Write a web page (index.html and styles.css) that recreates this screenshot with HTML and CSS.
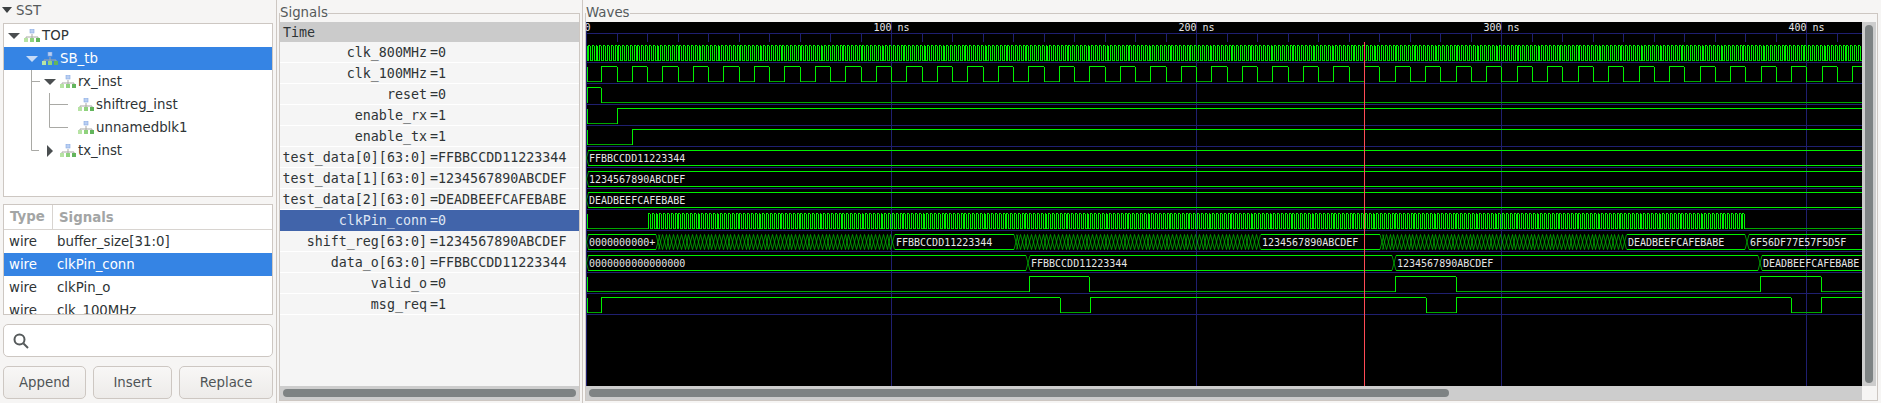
FILE: index.html
```html
<!DOCTYPE html>
<html>
  <head>
    <meta charset="utf-8">
    <title>GTKWave</title>
    <link rel="stylesheet" href="styles.css">
  </head>
  <body>
    <svg class="defs" width="0" height="0">
      <symbol id="scope" viewBox="0 0 16 14">
        <path d="M8 5v3M2 10V8h12v2M8 8v2" fill="none" stroke="#a9a9a5"/>
        <rect x="6" y="0" width="4" height="4" fill="#b9cff2" stroke="#86a9e2" stroke-width="0.6"/>
        <rect x="0" y="9" width="4" height="4" fill="#b7e3a4"/>
        <rect x="6" y="9" width="4" height="4" fill="#8fd27d"/>
        <rect x="12" y="9" width="4" height="4" fill="#63b55c"/>
      </symbol>
    </svg>

    <div class="app">
      <div class="sst">
        <div class="sst-title">
          <svg class="arrow-small" viewBox="0 0 10 6"><path d="M0 0h10L5 6z"/></svg>
          <span>SST</span>
        </div>

        <div class="tree">
          <svg class="tree-lines" width="269" height="172" viewBox="0 0 269 172">
            <path class="line-sel" d="M9.5 23v11.5H17"/>
            <path d="M27.5 46v80.5H35M27.5 57.5H36"/>
            <path d="M45.5 69v34.5H64M45.5 80.5H64"/>
          </svg>
          <div class="tree-row">
            <svg class="arrow" viewBox="0 0 12 6"><path d="M0 0h12L6 6z"/></svg>
            <svg class="scope"><use href="#scope"/></svg>
            <span>TOP</span>
          </div>
          <div class="tree-row level1 selected">
            <svg class="arrow" viewBox="0 0 12 6"><path d="M0 0h12L6 6z"/></svg>
            <svg class="scope"><use href="#scope"/></svg>
            <span>SB_tb</span>
          </div>
          <div class="tree-row level2">
            <svg class="arrow" viewBox="0 0 12 6"><path d="M0 0h12L6 6z"/></svg>
            <svg class="scope"><use href="#scope"/></svg>
            <span>rx_inst</span>
          </div>
          <div class="tree-row level3">
            <span class="arrow"></span>
            <svg class="scope"><use href="#scope"/></svg>
            <span>shiftreg_inst</span>
          </div>
          <div class="tree-row level3">
            <span class="arrow"></span>
            <svg class="scope"><use href="#scope"/></svg>
            <span>unnamedblk1</span>
          </div>
          <div class="tree-row level2">
            <svg class="arrow" viewBox="0 0 12 12"><path d="M3 0l6 6-6 6z"/></svg>
            <svg class="scope"><use href="#scope"/></svg>
            <span>tx_inst</span>
          </div>
        </div>

        <div class="var-list">
          <div class="var-head">
            <div class="col-type">Type</div>
            <div class="col-name">Signals</div>
          </div>
          <div class="var-row"><div class="col-type">wire</div><div class="col-name">buffer_size[31:0]</div></div>
          <div class="var-row selected"><div class="col-type">wire</div><div class="col-name">clkPin_conn</div></div>
          <div class="var-row"><div class="col-type">wire</div><div class="col-name">clkPin_o</div></div>
          <div class="var-row"><div class="col-type">wire</div><div class="col-name">clk_100MHz</div></div>
        </div>

        <div class="search">
          <svg width="16" height="16" viewBox="0 0 16 16">
            <circle cx="6.5" cy="6.5" r="5" fill="none" stroke="#555a5b" stroke-width="2"/>
            <path d="M10.5 10.5l4.5 4.5" stroke="#555a5b" stroke-width="2"/>
          </svg>
        </div>

        <div class="buttons">
          <button type="button">Append</button>
          <button type="button">Insert</button>
          <button type="button">Replace</button>
        </div>
      </div>

      <div class="pane pane-signals">
        <fieldset class="frame">
          <legend>Signals</legend>
          <div class="signals">
            <div class="time-row">Time</div>
            <div class="sig-row"><span class="sig-name">clk_800MHz</span><span>=0</span></div>
            <div class="sig-row"><span class="sig-name">clk_100MHz</span><span>=1</span></div>
            <div class="sig-row"><span class="sig-name">reset</span><span>=0</span></div>
            <div class="sig-row"><span class="sig-name">enable_rx</span><span>=1</span></div>
            <div class="sig-row"><span class="sig-name">enable_tx</span><span>=1</span></div>
            <div class="sig-row"><span class="sig-name">test_data[0][63:0]</span><span>=FFBBCCDD11223344</span></div>
            <div class="sig-row"><span class="sig-name">test_data[1][63:0]</span><span>=1234567890ABCDEF</span></div>
            <div class="sig-row"><span class="sig-name">test_data[2][63:0]</span><span>=DEADBEEFCAFEBABE</span></div>
            <div class="sig-row selected"><span class="sig-name">clkPin_conn</span><span>=0</span></div>
            <div class="sig-row"><span class="sig-name">shift_reg[63:0]</span><span>=1234567890ABCDEF</span></div>
            <div class="sig-row"><span class="sig-name">data_o[63:0]</span><span>=FFBBCCDD11223344</span></div>
            <div class="sig-row"><span class="sig-name">valid_o</span><span>=0</span></div>
            <div class="sig-row"><span class="sig-name">msg_req</span><span>=1</span></div>
          </div>
          <div class="hscroll"><div class="thumb"></div></div>
        </fieldset>
      </div>

      <div class="pane pane-waves">
        <fieldset class="frame">
          <legend>Waves</legend>
          <div class="waves-grid">
            <svg id="waves" class="waves" width="1276" height="364" viewBox="587 22 1276 364"></svg>
            <div class="vscroll"><div class="thumb"></div></div>
            <div class="hscroll"><div class="thumb thumb-waves"></div></div>
            <div class="corner"></div>
          </div>
        </fieldset>
      </div>
    </div>

    <script src="waves.js"></script>
  </body>
</html>
```

FILE: styles.css
```css
* {
  box-sizing: border-box;
}

body {
  margin: 0;
  width: 1881px;
  height: 403px;
  overflow: hidden;
  background-color: #f6f5f4;
  color: #2e3436;
  font-family: "DejaVu Sans", sans-serif;
  font-size: 13.33px;
}

.defs {
  display: block;
  height: 0;
}

.app {
  display: flex;
  height: 403px;
}

/* left column */
.sst {
  width: 277px;
  padding: 0 3px;
  border-right: 1px solid #cdc7c2;
  display: flex;
  flex-direction: column;
}

.sst-title {
  height: 23px;
  display: flex;
  align-items: center;
  gap: 4px;
  padding: 0 0 3px 0;
  color: #555a5b;
}

.arrow-small {
  width: 10px;
  height: 6px;
  margin-left: -1px;
  fill: #3c4042;
}

.tree {
  position: relative;
  height: 174px;
  background-color: #ffffff;
  border: 1px solid #cdc7c2;
}

.tree-lines {
  position: absolute;
  left: 0;
  top: 0;
  fill: none;
  stroke: #a9a9a5;
}

.tree-lines .line-sel {
  stroke: #c9dcf6;
}

.tree-row {
  position: relative;
  height: 23px;
  display: flex;
  align-items: center;
  padding-left: 4px;
}

.tree-row .arrow {
  width: 12px;
  height: 12px;
  margin-right: 4px;
  fill: #4a4e50;
  flex: none;
}

.tree-row .scope {
  width: 16px;
  height: 14px;
  margin-right: 2px;
  flex: none;
}

.level1 { padding-left: 22px; }
.level2 { padding-left: 40px; }
.level3 { padding-left: 58px; }

.tree-row.selected {
  background-color: #3584e4;
  color: #ffffff;
}

.tree-row.selected .arrow {
  fill: #c6dbf7;
}

.var-list {
  height: 111px;
  margin-top: 7px;
  overflow: hidden;
  background-color: #ffffff;
  border: 1px solid #cdc7c2;
}

.var-head,
.var-row {
  display: grid;
  grid-template-columns: 49px 1fr;
  align-items: center;
}

.var-head {
  height: 25px;
  border-bottom: 1px solid #d8d4d0;
  color: #a3a5a5;
  font-weight: bold;
}

.var-head .col-type {
  height: 100%;
  padding: 4px 0 0 6px;
  border-right: 1px solid #d8d4d0;
}

.var-head .col-name {
  padding-left: 6px;
}

.var-row {
  height: 23px;
}

.var-row .col-type {
  padding-left: 5px;
}

.var-row .col-name {
  padding-left: 4px;
}

.var-row.selected {
  background-color: #3584e4;
  color: #ffffff;
}

.search {
  height: 33px;
  margin-top: 9px;
  padding-left: 9px;
  display: flex;
  align-items: center;
  background-color: #ffffff;
  border: 1px solid #cdc7c2;
  border-radius: 5px;
}

.buttons {
  display: grid;
  grid-template-columns: 83px 79px 1fr;
  gap: 7px;
  margin-top: 9px;
}

button {
  height: 33px;
  padding: 0;
  background: linear-gradient(#f8f7f6, #edebe9);
  border: 1px solid #cdc7c2;
  border-radius: 5px;
  color: #4f5456;
  font-family: inherit;
  font-size: 13.33px;
}

/* signals and waves */
.pane {
  display: flex;
}

.pane-signals {
  width: 306px;
  padding: 5px 2px 2px 2px;
  border-right: 1px solid #cdc7c2;
}

.pane-waves {
  flex: 1;
  padding: 5px 3px 2px 2px;
}

.frame {
  flex: 1;
  min-width: 0;
  margin: 0;
  padding: 0;
  border: 1px solid #cdc7c2;
}

.frame legend {
  height: 17px;
  padding: 0;
  line-height: 15px;
  color: #555a5b;
}

.signals {
  height: 364px;
  background-color: #f5f5f5;
  color: #2e3436;
  font-family: "DejaVu Sans Mono", monospace;
  font-size: 13.33px;
}

.time-row {
  height: 20px;
  padding-left: 3px;
  background-color: #cbcbcb;
  line-height: 21px;
}

.sig-row {
  height: 21px;
  display: grid;
  grid-template-columns: 147px 1fr;
  column-gap: 3px;
  border-bottom: 1px solid #ffffff;
  line-height: 22px;
  white-space: nowrap;
}

.sig-name {
  text-align: right;
}

.sig-row.selected {
  background-color: #4164aa;
  color: #dfe6f4;
  border-bottom-color: #4164aa;
}

.hscroll {
  height: 14px;
  padding: 3px;
  background-color: #cdcdcd;
}

.vscroll {
  padding: 3px;
  background-color: #cdcdcd;
}

.thumb {
  height: 100%;
  background-color: #7e8384;
  border-radius: 4px;
}

.thumb-waves {
  width: 860px;
}

.waves-grid {
  display: grid;
  grid-template-columns: 1276px 14px;
  grid-template-rows: 364px 14px;
}

.waves {
  display: block;
  background-color: #000000;
}

.waves .tick,
.waves .value {
  fill: #e6e6e6;
  font-family: "DejaVu Sans Mono", monospace;
  font-size: 10px;
}

.corner {
  background-color: #f6f5f4;
}
```

FILE: waves.js
```js
const NS = 'http://www.w3.org/2000/svg';
const svg = document.getElementById('waves');
const END = 1863;
const PX_PER_NS = 3.051;

const GRID = '#1f1f70';
const HIGH = '#00f000';
const LOW = '#00a800';
const FUZZ = '#00b400';

function add(tag, attrs, text) {
  const el = document.createElementNS(NS, tag);
  for (const k in attrs) el.setAttribute(k, attrs[k]);
  if (text) el.textContent = text;
  svg.appendChild(el);
  return el;
}

function line(d, color, smooth) {
  add('path', {
    d: d,
    fill: 'none',
    stroke: color,
    'stroke-width': smooth ? 0.8 : 1,
    'shape-rendering': smooth ? 'auto' : 'crispEdges'
  });
}

function timeX(ns) {
  return Math.floor(587.5 + PX_PER_NS * ns);
}

// row i has its grid line at y = 62 + 21 * i
function rowY(i) {
  const b = 62 + 21 * i;
  return { grid: b + 0.5, high: b - 16.5, low: b - 1.5 };
}

function drawGrid() {
  let d = 'M587 33.5H' + END;
  for (let i = 0; i < 13; i++) d += 'M587 ' + rowY(i).grid + 'H' + END;
  for (let ns = 0; ns * PX_PER_NS < END - 587; ns += 10) {
    const x = timeX(ns) + 0.5;
    d += ns % 100 === 0 ? 'M' + x + ' 22V386' : 'M' + x + ' 33V42';
  }
  line(d, GRID);

  for (let k = 1; k <= 4; k++) {
    add('text', { class: 'tick', x: timeX(k * 100) + 0.5, y: 31, 'text-anchor': 'middle' }, k * 100 + ' ns');
  }
  add('text', { class: 'tick', x: 585.5, y: 31 }, '0');
}

// edges: pixel positions where the level flips
function binary(i, level, edges) {
  const y = rowY(i);
  let low = '';
  let high = 'M588.5 ' + y.high + 'V' + y.low;
  let x = 588;
  const points = edges.concat([END]);
  points.forEach(next => {
    if (next > x) {
      const seg = 'M' + x + ' ' + (level ? y.high : y.low) + 'H' + next;
      if (level) high += seg; else low += seg;
    }
    if (next < END) high += 'M' + (next + 0.5) + ' ' + y.high + 'V' + y.low;
    x = next;
    level = !level;
  });
  line(low, LOW);
  line(high, HIGH);
}

function clock(fromNs, toNs, halfNs) {
  const edges = [];
  for (let t = fromNs; t < toNs; t += halfNs) edges.push(timeX(t));
  return edges;
}

// segments: [from, to, text]; a null text is a stretch of changing values
function bus(i, segments) {
  const y = rowY(i);
  const mid = (y.high + y.low) / 2;
  let bright = '';
  let dark = 'M587.5 ' + mid + 'L589.5 ' + y.high + 'M587.5 ' + mid + 'L589.5 ' + y.low;
  segments.forEach(seg => {
    const a = seg[0];
    const b = seg[1];
    if (seg[2] === null) {
      for (let x = a; x < b - 1; x += 3.81) {
        const x1 = Math.round(x) + 0.5;
        const x2 = Math.round(x + 3.81) + 0.5;
        dark += 'M' + x1 + ' ' + y.high + 'L' + x2 + ' ' + y.low;
        dark += 'M' + x1 + ' ' + y.low + 'L' + x2 + ' ' + y.high;
      }
      return;
    }
    bright += 'M' + (a + 2) + ' ' + y.high + 'H' + (b < END ? b - 2 : END);
    bright += 'M' + (a + 2) + ' ' + y.low + 'H' + (b < END ? b - 2 : END);
    if (b < END) {
      dark += 'M' + (b - 2) + ' ' + y.high + 'L' + (b + 2) + ' ' + y.low;
      dark += 'M' + (b - 2) + ' ' + y.low + 'L' + (b + 2) + ' ' + y.high;
    }
    add('text', { class: 'value', x: a + 3, y: y.low - 3.5 }, seg[2]);
  });
  line(bright, HIGH);
  line(dark, FUZZ, true);
}

drawGrid();

binary(0, false, clock(0.625, 420, 0.625));
binary(1, false, clock(5, 420, 5));
binary(2, true, [timeX(5)]);
binary(3, false, [timeX(10)]);
binary(4, false, [timeX(15)]);

bus(5, [[587, END, 'FFBBCCDD11223344']]);
bus(6, [[587, END, '1234567890ABCDEF']]);
bus(7, [[587, END, 'DEADBEEFCAFEBABE']]);

binary(8, false, clock(20.3, 380, 0.625));

bus(9, [
  [587, 659, '0000000000+'],
  [659, 894, null],
  [894, 1017, 'FFBBCCDD11223344'],
  [1017, 1260, null],
  [1260, 1383, '1234567890ABCDEF'],
  [1383, 1626, null],
  [1626, 1748, 'DEADBEEFCAFEBABE'],
  [1748, END, '6F56DF77E57F5D5F']
]);

bus(10, [
  [587, 1029, '0000000000000000'],
  [1029, 1395, 'FFBBCCDD11223344'],
  [1395, 1761, '1234567890ABCDEF'],
  [1761, END, 'DEADBEEFCAFEBABE']
]);

binary(11, false, [1030, 1090, 1396, 1457, 1761, 1822]);
binary(12, false, [602, 1061, 1091, 1427, 1457, 1792, 1822]);

// cursor
line('M1365.5 42V386', '#ff4a55');
```
